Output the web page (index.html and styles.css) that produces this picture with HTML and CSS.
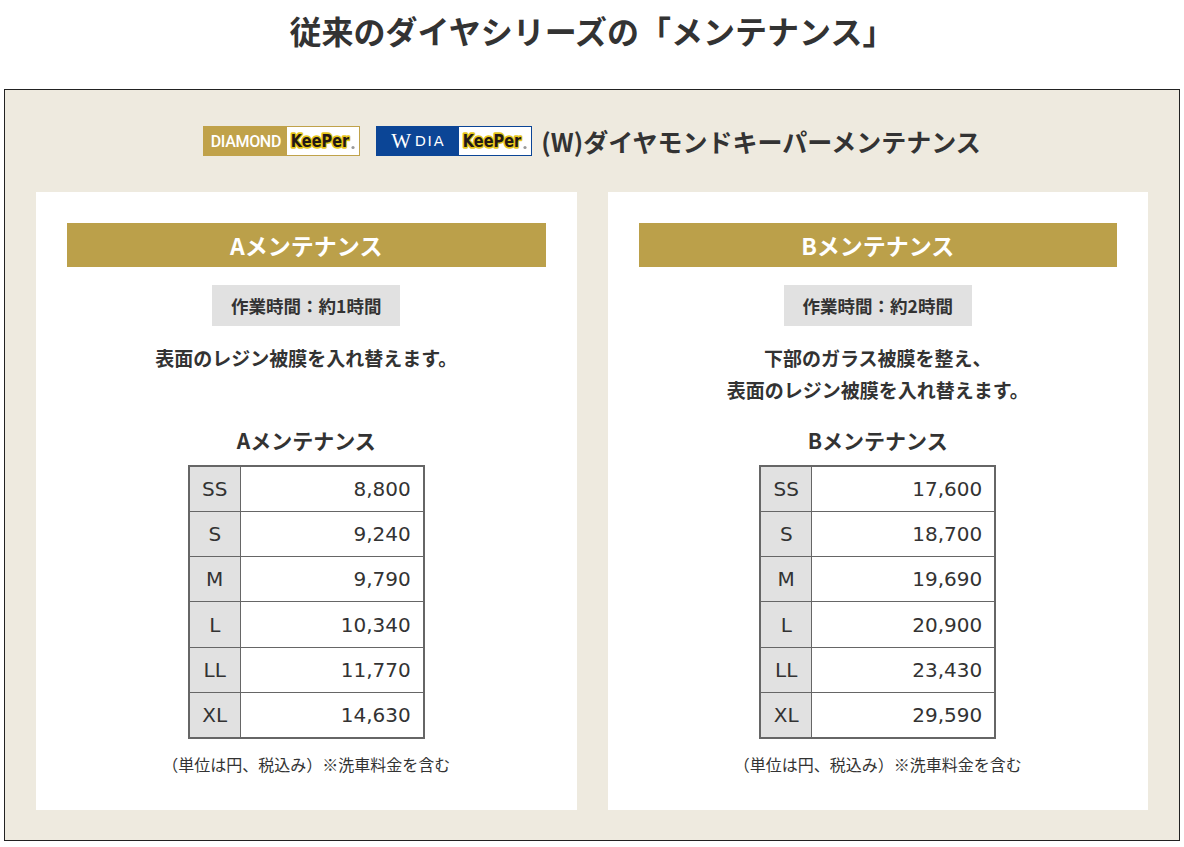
FILE: index.html
```html
<!DOCTYPE html>
<html lang="ja">
<head>
<meta charset="utf-8">
<title>従来のダイヤシリーズの「メンテナンス」</title>
<link rel="stylesheet" href="styles.css">
</head>
<body>
<div class="page">
  <h1 class="title">従来のダイヤシリーズの「メンテナンス」</h1>
  <section class="box">
    <div class="brand-row">
      <span class="logo logo-diamond">
        <span class="logo-left">DIAMOND</span>
        <span class="logo-right">
          <svg class="keeper" width="70" height="26" viewBox="0 0 70 26"><g transform="translate(0,19) scale(1,1.25)"><text x="32" y="0" text-anchor="middle" font-family="DejaVu Sans" font-weight="bold" font-size="14.5" fill="#231815" stroke="#e6c619" stroke-width="2.6" stroke-linejoin="round" paint-order="stroke">KeePer</text></g><circle cx="65" cy="19.5" r="1.6" fill="#9a9a9a"/></svg>
        </span>
      </span>
      <span class="logo logo-wdia">
        <span class="logo-left"><span class="w">W</span><span class="dia">DIA</span></span>
        <span class="logo-right">
          <svg class="keeper" width="70" height="26" viewBox="0 0 70 26"><g transform="translate(0,19) scale(1,1.25)"><text x="32" y="0" text-anchor="middle" font-family="DejaVu Sans" font-weight="bold" font-size="14.5" fill="#231815" stroke="#e6c619" stroke-width="2.6" stroke-linejoin="round" paint-order="stroke">KeePer</text></g><circle cx="65" cy="19.5" r="1.6" fill="#9a9a9a"/></svg>
        </span>
      </span>
      <span class="brand-name">(W)ダイヤモンドキーパーメンテナンス</span>
    </div>
    <div class="cards">
      <div class="card">
        <div class="card-head">Aメンテナンス</div>
        <div class="time">作業時間：約1時間</div>
        <p class="desc">表面のレジン被膜を入れ替えます。</p>
        <h3 class="price-title">Aメンテナンス</h3>
        <table class="price">
          <tr><th>SS</th><td>8,800</td></tr>
          <tr><th>S</th><td>9,240</td></tr>
          <tr><th>M</th><td>9,790</td></tr>
          <tr><th>L</th><td>10,340</td></tr>
          <tr><th>LL</th><td>11,770</td></tr>
          <tr><th>XL</th><td>14,630</td></tr>
        </table>
        <p class="note">（単位は円、税込み）※洗車料金を含む</p>
      </div>
      <div class="card">
        <div class="card-head">Bメンテナンス</div>
        <div class="time">作業時間：約2時間</div>
        <p class="desc">下部のガラス被膜を整え、<br>表面のレジン被膜を入れ替えます。</p>
        <h3 class="price-title">Bメンテナンス</h3>
        <table class="price">
          <tr><th>SS</th><td>17,600</td></tr>
          <tr><th>S</th><td>18,700</td></tr>
          <tr><th>M</th><td>19,690</td></tr>
          <tr><th>L</th><td>20,900</td></tr>
          <tr><th>LL</th><td>23,430</td></tr>
          <tr><th>XL</th><td>29,590</td></tr>
        </table>
        <p class="note">（単位は円、税込み）※洗車料金を含む</p>
      </div>
    </div>
  </section>
</div>
</body>
</html>
```
FILE: styles.css
```css
html, body {
  margin: 0;
  padding: 0;
  background: #ffffff;
}
body {
  font-family: "Noto Sans CJK JP", sans-serif;
  color: #333333;
}
.page {
  padding: 6px 4px 6px;
}
.title {
  margin: 0 0 35px;
  font-size: 32px;
  line-height: 48px;
  font-weight: 700;
  text-align: center;
  color: #333333;
}
.box {
  background: #eeeadf;
  border: 1px solid #222222;
  padding: 36px 31px 30px;
}
.brand-row {
  display: flex;
  justify-content: center;
  align-items: center;
  height: 30px;
}
.logo {
  display: flex;
  box-sizing: border-box;
  height: 30px;
  width: 157px;
  border: 1px solid #c0a24a;
}
.logo-left {
  display: flex;
  align-items: center;
  justify-content: center;
  flex: 0 0 83px;
  background: #c0a24a;
  color: #ffffff;
  font-family: Roboto, "Liberation Sans", sans-serif;
  font-weight: 500;
  font-size: 16px;
  letter-spacing: -0.3px;
}
.logo-right {
  flex: 1 1 auto;
  display: flex;
  align-items: center;
  justify-content: center;
  background: #ffffff;
}
.logo-wdia {
  margin-left: 16px;
  width: 156px;
  border-color: #0b4596;
}
.logo-wdia .logo-left {
  background: #0b4596;
  flex-basis: 82px;
  letter-spacing: 0;
}
.logo-wdia .w {
  font-family: "Liberation Serif", serif;
  font-weight: 400;
  font-size: 21px;
  margin-right: 5px;
  letter-spacing: -1.5px;
}
.logo-wdia .dia {
  font-family: "DejaVu Sans", sans-serif;
  font-weight: 400;
  font-size: 14.5px;
  letter-spacing: 1.8px;
}
.keeper {
  display: block;
  flex: none;
}
.brand-name {
  margin-left: 9px;
  font-size: 25px;
  line-height: 30px;
  font-weight: 700;
  color: #333333;
}
.cards {
  display: grid;
  grid-template-columns: 1fr 1fr;
  column-gap: 31px;
  margin-top: 36px;
}
.card {
  background: #ffffff;
  padding: 31px 31px 34px;
  display: flex;
  flex-direction: column;
  align-items: center;
}
.card-head {
  align-self: stretch;
  height: 44px;
  line-height: 44px;
  background: #bba04a;
  color: #ffffff;
  font-size: 23px;
  font-weight: 700;
  text-align: center;
}
.time {
  margin-top: 18px;
  height: 41px;
  line-height: 41px;
  padding: 0 19px;
  background: #e1e1e1;
  font-size: 17.5px;
  font-weight: 700;
  color: #333333;
}
.desc {
  margin: 16px 0 0;
  min-height: 64px;
  font-size: 19px;
  line-height: 32px;
  font-weight: 700;
  text-align: center;
}
.price-title {
  margin: 19px 0 0;
  font-size: 21px;
  line-height: 30px;
  font-weight: 700;
}
.price {
  margin-top: 10px;
  border-collapse: separate;
  border-spacing: 0;
  border: 2px solid #666666;
  font-family: "DejaVu Sans", "Noto Sans CJK JP", sans-serif;
  font-size: 20px;
  color: #333333;
}
.price th, .price td {
  height: 44.17px;
  padding: 0;
  line-height: 24px;
  border-top: 1px solid #666666;
  font-weight: 400;
}
.price tr:first-child th, .price tr:first-child td {
  border-top: 0;
}
.price th {
  width: 50px;
  background: #e1e1e1;
  border-right: 1px solid #666666;
  text-align: center;
}
.price td {
  width: 170px;
  padding-right: 12px;
  text-align: right;
}
.note {
  margin: 13px 0 0;
  font-size: 16px;
  line-height: 24px;
  color: #333333;
}
```
